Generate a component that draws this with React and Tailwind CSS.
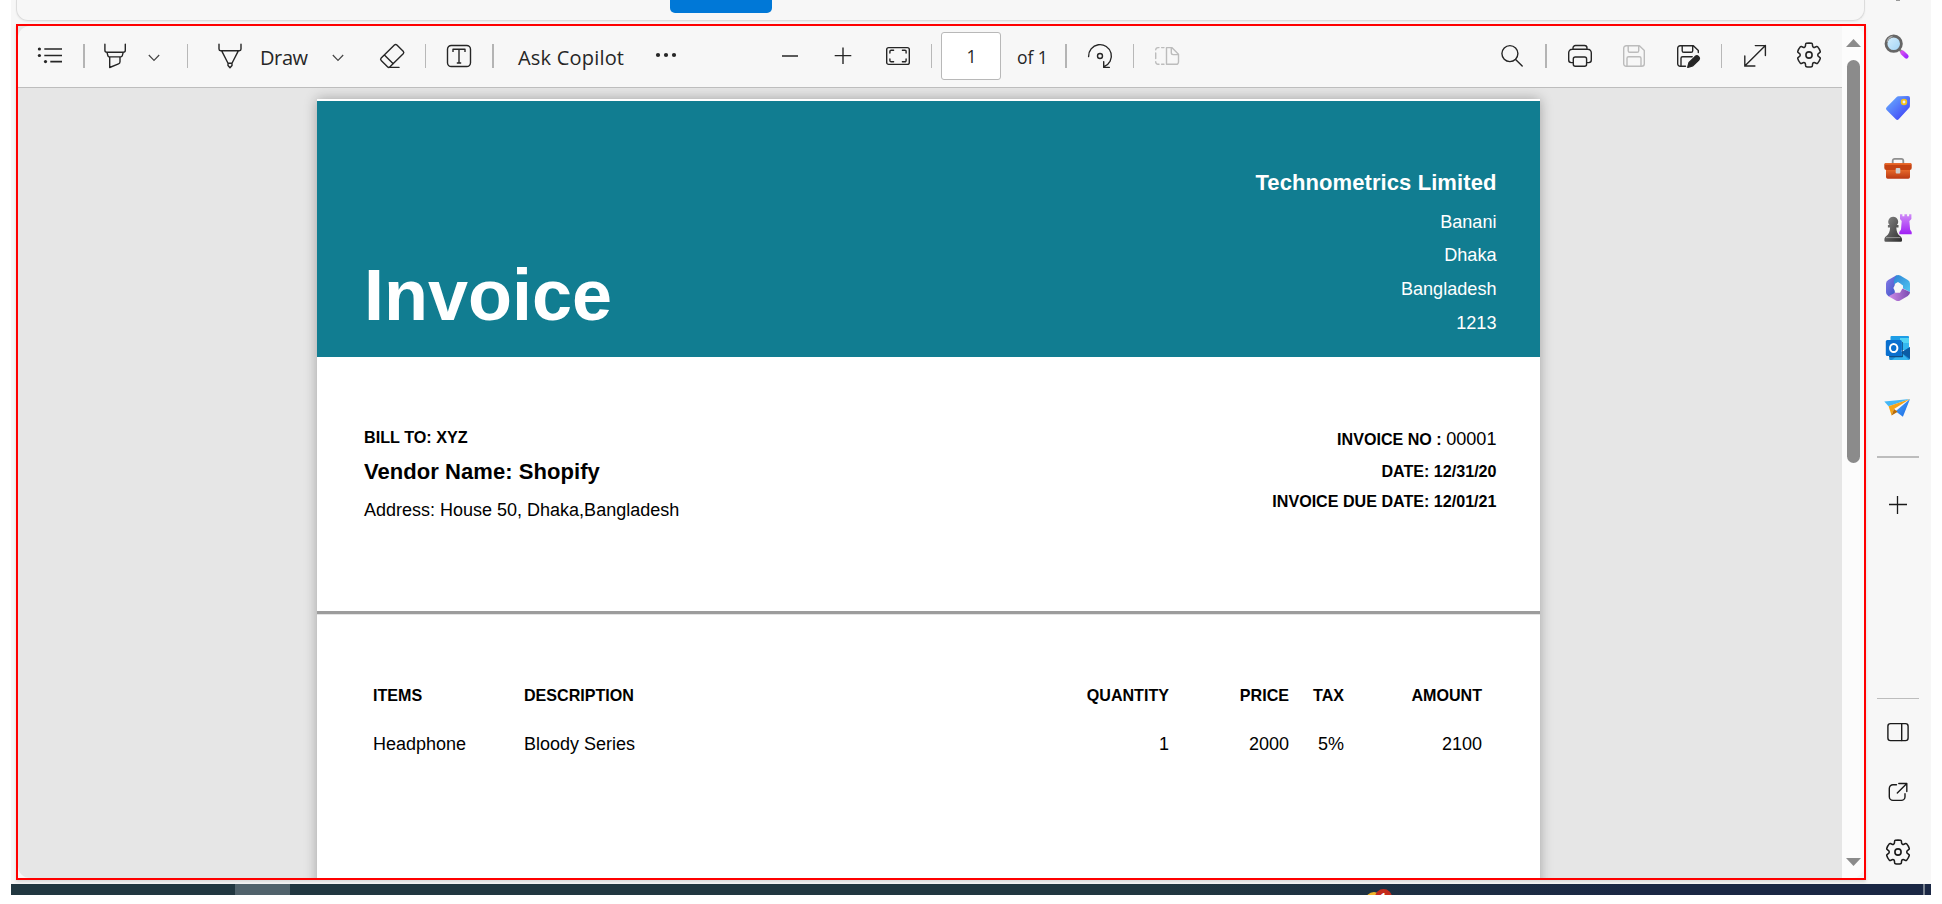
import React from "react";

const GEAR =
  "M12.012 2.25c.734.008 1.465.093 2.182.253a.75.75 0 0 1 .582.649l.17 1.527a1.384 1.384 0 0 0 1.927 1.116l1.401-.615a.75.75 0 0 1 .85.174 9.792 9.792 0 0 1 2.204 3.792.75.75 0 0 1-.271.825l-1.242.916a1.381 1.381 0 0 0 0 2.226l1.243.915a.75.75 0 0 1 .272.826 9.797 9.797 0 0 1-2.204 3.792.75.75 0 0 1-.848.175l-1.407-.617a1.38 1.38 0 0 0-1.926 1.114l-.169 1.526a.75.75 0 0 1-.572.647 9.518 9.518 0 0 1-4.406 0 .75.75 0 0 1-.572-.647l-.168-1.524a1.382 1.382 0 0 0-1.926-1.11l-1.406.616a.75.75 0 0 1-.849-.175 9.798 9.798 0 0 1-2.204-3.796.75.75 0 0 1 .272-.826l1.243-.916a1.38 1.38 0 0 0 0-2.226l-1.243-.914a.75.75 0 0 1-.271-.826 9.793 9.793 0 0 1 2.204-3.792.75.75 0 0 1 .85-.174l1.4.615a1.387 1.387 0 0 0 1.93-1.118l.17-1.526a.75.75 0 0 1 .583-.65c.717-.159 1.45-.243 2.201-.252Z";

function Icon({ className = "", children }) {
  return (
    <svg
      viewBox="0 0 24 24"
      className={`h-6 w-6 shrink-0 overflow-visible fill-none stroke-[1.4] ${className}`}
      stroke="currentColor"
      strokeLinecap="round"
      strokeLinejoin="round"
    >
      {children}
    </svg>
  );
}

function Chevron({ className = "" }) {
  return (
    <svg viewBox="0 0 12 24" className={`h-6 w-3 shrink-0 fill-none ${className}`} stroke="#444" strokeWidth="1.2">
      <path d="M.8 11l5.2 5.3L11.2 11" />
    </svg>
  );
}

function Gear({ className = "" }) {
  return (
    <svg viewBox="0 0 24 26" className={`h-[26px] w-6 shrink-0 overflow-visible fill-none ${className}`} stroke="currentColor" strokeWidth="1.25">
      <path d={GEAR} transform="translate(12 13) scale(1.21 1.24) translate(-12 -12)" />
      <circle cx="12" cy="13" r="3.1" strokeWidth="1.6" />
    </svg>
  );
}

const Thin = ({ className = "" }) => <div className={`h-6 w-px shrink-0 bg-[#b8b8b8] ${className}`} />;
const Thick = ({ className = "" }) => <div className={`h-6 w-0.5 shrink-0 bg-[#b4b4b4] ${className}`} />;

function Toolbar() {
  return (
    <div className="flex h-[62px] shrink-0 items-start rounded-tl-xl border-b border-[#bdbdbd] bg-[#f7f7f7] pt-[18px] font-['Open_Sans','Noto_Sans',sans-serif] text-[#262626]">
      <Icon className="ml-5 stroke-[1.7]">
        <path d="M6.3 5H24M6.3 11.5H24M12.3 17.6H24" strokeLinecap="butt" />
        <g fill="currentColor" stroke="none">
          <circle cx="1.4" cy="5" r="1.6" />
          <circle cx="1.4" cy="11.5" r="1.6" />
          <circle cx="7.5" cy="17.6" r="1.6" />
        </g>
      </Icon>
      <Thick className="ml-[21px]" />
      <Icon className="ml-[19px]">
        <path d="M.9.3v6a2 2 0 0 0 2 2h16.4a2 2 0 0 0 2-2v-6M3 8.4l.9 3.3a1.6 1.6 0 0 0 1.5 1.2h11.4a1.6 1.6 0 0 0 1.5-1.2l.9-3.3M5.7 13v10.5l8.8-3.6a2.3 2.3 0 0 0 1.5-2.1V13" />
      </Icon>
      <Chevron className="ml-5" />
      <Thin className="ml-[27px]" />
      <Icon className="ml-[30px]">
        <path d="M1 .3v4.8a1.6 1.6 0 0 0 1.6 1.6h18.8A1.6 1.6 0 0 0 23 5.1V.3M3.7 6.9l6.3 12.4h4l6.3-12.4M10 19.3v2.2l2 2.2 2-2.2v-2.2" />
      </Icon>
      <span className="ml-[18px] w-[50px] text-[20px] leading-[28px] tracking-[-0.4px] whitespace-nowrap">Draw</span>
      <Chevron className="ml-[22px]" />
      <Icon className="ml-9">
        <path d="M14.4 1l-13.2 13a1.8 1.8 0 0 0 0 2.5l6.3 6.3a1.8 1.8 0 0 0 2.5 0L23.2 9.8a1.8 1.8 0 0 0 0-2.5L16.9 1a1.8 1.8 0 0 0-2.5 0zM4.4 11l8.8 8.7M8.7 23.4H19" />
      </Icon>
      <Thin className="ml-[21px]" />
      <Icon className="ml-[21px]">
        <rect x=".5" y="1.5" width="23" height="21" rx="3.8" />
        <path d="M6 8V5.3h12V8M12 5.3V19M9.8 19h4.4" strokeLinecap="butt" />
      </Icon>
      <Thick className="ml-[21px]" />
      <span className="ml-6 w-[110px] text-[20px] leading-[28px] tracking-[0.2px] whitespace-nowrap">Ask Copilot</span>
      <svg viewBox="0 0 24 24" className="ml-[26px] h-6 w-6 shrink-0" fill="currentColor">
        <circle cx="4" cy="11" r="2.1" />
        <circle cx="12" cy="11" r="2.1" />
        <circle cx="20" cy="11" r="2.1" />
      </svg>
      <Icon className="ml-[100px]">
        <path d="M4 12h16" strokeLinecap="butt" />
      </Icon>
      <Icon className="ml-[29px]">
        <path d="M3.7 11.6h16.6M12 3.4V20" strokeLinecap="butt" />
      </Icon>
      <Icon className="ml-[31px]">
        <rect x=".7" y="3.6" width="22.6" height="16.8" rx="2" />
        <path d="M3.9 9V7.4a1.2 1.2 0 0 1 1.2-1.2H7.6M16.4 6.2h2.5a1.2 1.2 0 0 1 1.2 1.2V9M20.1 15v1.6a1.2 1.2 0 0 1-1.2 1.2h-2.5M7.6 17.8H5.1a1.2 1.2 0 0 1-1.2-1.2V15" />
      </Icon>
      <Thin className="ml-[21px]" />
      <div className="-mt-3 ml-[9px] flex h-12 w-[60px] shrink-0 items-center justify-center rounded-[3px] border border-[#b8b8b8] bg-white pt-px pl-px text-[17.5px]">1</div>
      <span className="ml-4 w-[48px] text-[17.5px] leading-[26px] tracking-[-0.1px] whitespace-nowrap">of 1</span>
      <Thick />
      <Icon className="ml-[21px]">
        <path d="M.6 12.6A11.4 11.4 0 1 1 16 22.7M15.7 17.6v5.8h5.6" />
        <circle cx="12" cy="12" r="2.5" />
      </Icon>
      <Thin className="ml-[21px]" />
      <Icon className="ml-[21px] text-[#bcbcbc]">
        <path d="M4 3.6H3A2.4 2.4 0 0 0 .7 5.8M.7 9v5.6M.7 17.8A2.4 2.4 0 0 0 3 20.3h1M6.6 3.6H9M6.6 20.3H9" />
        <path d="M11.5 3.6h5.3l6.7 6.7v7.8a2.2 2.2 0 0 1-2.2 2.2h-9.8zM16.3 3.8v5a1.8 1.8 0 0 0 1.8 1.8h5.2" />
      </Icon>
      <div className="grow" />
      <Icon>
        <circle cx="8.9" cy="9.6" r="8" />
        <path d="M14.6 15.5l6.6 6.5" />
      </Icon>
      <Thick className="ml-5" />
      <Icon className="ml-[21px]">
        <path d="M5 18.6H3.2a2.5 2.5 0 0 1-2.5-2.5V8.8a3.6 3.6 0 0 1 3.6-3.6h15.4a3.6 3.6 0 0 1 3.6 3.6v7.3a2.5 2.5 0 0 1-2.5 2.5H19M5 5.2V4a2.5 2.5 0 0 1 2.5-2.5h9A2.5 2.5 0 0 1 19 4v1.2" />
        <rect x="5.3" y="13" width="13.3" height="9.3" rx="2" />
      </Icon>
      <Icon className="ml-[31px] text-[#bcbcbc]">
        <path d="M3.2 1.7h13.2l4.9 4.9v13.2a2.5 2.5 0 0 1-2.5 2.5H3.2a2.5 2.5 0 0 1-2.5-2.5V4.2a2.5 2.5 0 0 1 2.5-2.5zM5.2 1.8v4.9a1.6 1.6 0 0 0 1.6 1.6h7.3a1.6 1.6 0 0 0 1.6-1.6V1.8M4 22.2v-7.9a1.6 1.6 0 0 1 1.6-1.6h10.8a1.6 1.6 0 0 1 1.6 1.6v7.9" />
      </Icon>
      <Icon className="ml-[30px]">
        <path d="M8.5 22.3H3.2a2.5 2.5 0 0 1-2.5-2.5V4.2a2.5 2.5 0 0 1 2.5-2.5h13.2l4.9 4.9v2M5.2 1.8v4.9a1.6 1.6 0 0 0 1.6 1.6h7.3a1.6 1.6 0 0 0 1.6-1.6V1.8M4 22.2v-7.9a1.6 1.6 0 0 1 1.6-1.6h9.6" />
        <path d="M18.3 12.4a2.5 2.5 0 0 1 3.5 3.5l-6 5.9-5 1.5 1.3-4.9z" fill="currentColor" />
      </Icon>
      <Thin className="ml-5" />
      <Icon className="ml-[22px]">
        <path d="M.8 22L21.4 1.6M11.3 1.6h10.1v10M.8 12v10h10.1" strokeLinejoin="miter" />
      </Icon>
      <Gear className="-mt-[2px] mr-[21px] ml-[29px]" />
    </div>
  );
}

function InvoicePage() {
  return (
    <div className="ml-[299px] h-[800px] w-[1223px] bg-white pt-[2px] font-['Liberation_Sans',Arial,sans-serif] text-black shadow-[0_0_12px_rgba(0,0,0,0.3)]">
      <header className="flex h-64 items-end justify-between bg-[#117d91] pr-[43.5px] pl-[47px] text-white">
        <h1 className="mb-[22px] text-[72px] leading-[80px] font-bold">Invoice</h1>
        <div className="flex flex-col self-start pt-[67px] text-right text-[18.1px]">
          <div className="mb-[7px] text-[22px] leading-[30px] font-bold tracking-[0.09px]">Technometrics Limited</div>
          <div className="leading-[34px]">Banani</div>
          <div className="leading-[32px]">Dhaka</div>
          <div className="leading-[36px]">Bangladesh</div>
          <div className="leading-[32px]">1213</div>
        </div>
      </header>
      <section className="flex h-[254px] justify-between pr-[43.5px] pl-[47px]">
        <div className="flex flex-col gap-1.5 pt-[68px]">
          <div className="text-[16.2px] leading-6 font-bold">BILL TO: XYZ</div>
          <div className="text-[22px] leading-[34px] font-bold tracking-[0.06px]">Vendor Name: Shopify</div>
          <div className="text-[18px] leading-[30px]">Address: House 50, Dhaka,Bangladesh</div>
        </div>
        <div className="flex flex-col pt-[67px] text-right text-[16.1px] leading-[30px] font-bold">
          <div className="mb-[2px] h-[30px]">
            INVOICE NO : <span className="text-[18.1px] font-normal">00001</span>
          </div>
          <div>DATE: 12/31/20</div>
          <div>INVOICE DUE DATE: 12/01/21</div>
        </div>
      </section>
      <div className="h-1 border-b border-[#e4e4e4] bg-[#9c9c9c]" />
      <table className="mt-[68px] ml-[56px] w-[1109px] table-fixed border-collapse text-right text-[18px] leading-[30px]">
        <colgroup>
          <col className="w-[151px]" />
          <col className="w-[400px]" />
          <col className="w-[245px]" />
          <col className="w-[120px]" />
          <col className="w-[55px]" />
          <col className="w-[138px]" />
        </colgroup>
        <thead>
          <tr className="h-[46px] align-top text-[16.1px] leading-6">
            <th className="text-left">ITEMS</th>
            <th className="text-left">DESCRIPTION</th>
            <th>QUANTITY</th>
            <th>PRICE</th>
            <th>TAX</th>
            <th>AMOUNT</th>
          </tr>
        </thead>
        <tbody>
          <tr>
            <td className="text-left">Headphone</td>
            <td className="text-left">Bloody Series</td>
            <td>1</td>
            <td>2000</td>
            <td>5%</td>
            <td>2100</td>
          </tr>
        </tbody>
      </table>
    </div>
  );
}

function Scrollbar() {
  return (
    <div className="flex w-[22px] shrink-0 flex-col items-center rounded-r-xl bg-[#fcfcfc] pt-[13px] pb-3">
      <svg viewBox="0 0 16 8" className="ml-px h-2 w-[15px] fill-[#8b8b8b]" preserveAspectRatio="none">
        <path d="M8 0l8 8H0z" />
      </svg>
      <div className="mt-[13px] h-[403px] w-[13px] rounded-full bg-[#8b8b8b]" />
      <svg viewBox="0 0 16 8" className="mt-auto ml-px h-2 w-[15px] fill-[#8b8b8b]" preserveAspectRatio="none">
        <path d="M8 8l8-8H0z" />
      </svg>
    </div>
  );
}

function AppIcon({ className = "", children }) {
  return (
    <svg viewBox="0 0 28 28" className={`h-7 w-7 shrink-0 overflow-visible ${className}`}>
      {children}
    </svg>
  );
}

function Gradient({ id, from, to, x2 = "1", y2 = "1" }) {
  return (
    <linearGradient id={id} x1="0" y1="0" x2={x2} y2={y2}>
      <stop stopColor={from} />
      <stop offset="1" stopColor={to} />
    </linearGradient>
  );
}

function Sidebar() {
  return (
    <aside className="flex w-[65px] shrink-0 flex-col items-center pr-px text-[#1a1a1a]">
      <div className="h-px w-1 bg-[#999]" />
      <AppIcon className="mt-[31px]">
        <defs>
          <Gradient id="lens" from="#d9f0fd" to="#9fd3f6" />
          <Gradient id="handle" from="#d24bf0" to="#a32bff" />
        </defs>
        <path d="M15 17.2l3 3" stroke="#888" strokeWidth="2.4" />
        <path d="M18.4 20.6l4 3.8" stroke="url(#handle)" strokeWidth="4.4" strokeLinecap="round" />
        <circle cx="9.7" cy="11.7" r="7.7" fill="url(#lens)" stroke="#666" strokeWidth="2.8" />
        <path d="M3.2 9.8a7 7 0 0 1 5.3-5.4" fill="none" stroke="#aaa" strokeWidth="1.3" />
      </AppIcon>
      <AppIcon className="mt-[34px]">
        <defs>
          <Gradient id="tag" from="#6cb6ff" to="#3a35f5" />
        </defs>
        <path d="M14.2 2.2L24 2a2 2 0 0 1 2 2l-.1 8a3 3 0 0 1-.9 2.1L14.7 25.2a2 2 0 0 1-2.8 0L2.6 16a2 2 0 0 1 0-2.8L12.7 3a3 3 0 0 1 1.5-.8z" fill="url(#tag)" />
        <circle cx="20" cy="8" r="2.3" fill="#e8edff" stroke="#f3c21b" strokeWidth="1.8" />
      </AppIcon>
      <AppIcon className="mt-8">
        <defs>
          <Gradient id="case" from="#f0732f" to="#b93812" x2="0" />
        </defs>
        <path d="M8.7 10V6.8a2 2 0 0 1 2-2h6.6a2 2 0 0 1 2 2V10" fill="none" stroke="#8f8f8f" strokeWidth="1.8" />
        <path d="M2 14h24v9a1.7 1.7 0 0 1-1.7 1.7H3.7A1.7 1.7 0 0 1 2 23z" fill="url(#case)" />
        <path d="M1.5 9.2h25a1.2 1.2 0 0 1 1.2 1.2V14a2 2 0 0 1-2 2H2.3a2 2 0 0 1-2-2v-3.6a1.2 1.2 0 0 1 1.2-1.2z" fill="#c54312" />
        <path d="M1 10h26" stroke="#ee6a27" strokeWidth="1.5" />
        <rect x="11.7" y="14" width="4.6" height="5.4" rx="1" fill="#cfcfcf" />
      </AppIcon>
      <AppIcon className="mt-[31px]">
        <defs>
          <Gradient id="rook" from="#cf8bf7" to="#a020f5" x2="0" />
          <Gradient id="pawn" from="#8a8a8a" to="#2c2c2c" />
        </defs>
        <path d="M16 1.3h2.4v2h2v-2h2.7v2h2v-2h2.3V6l-2 2 .7 8.5 1.6 2.5v2.2H15.3V19l1.7-2.5L17.7 8 16 6z" fill="url(#rook)" />
        <path d="M9.2 3.7a5 5 0 0 1 3.6 8.4h1.7v2.4h-2.2c.2 4 1.2 6.5 3.7 8.6 1.5 1 2 2.2 2 3.4v1a1.2 1.2 0 0 1-1.2 1.2H1.6a1.2 1.2 0 0 1-1.2-1.2v-1c0-1.2.5-2.4 2-3.4 2.5-2.1 3.5-4.6 3.7-8.6H3.9v-2.4h1.7a5 5 0 0 1 3.6-8.4z" fill="url(#pawn)" />
        <path d="M2 24.6h14.3" stroke="#aaa" strokeWidth=".8" />
      </AppIcon>
      <AppIcon className="mt-[33px]">
        <defs>
          <Gradient id="m1" from="#8c7ce8" to="#3451c4" />
          <Gradient id="m2" from="#2d83d5" to="#52c8f2" />
          <Gradient id="m3" from="#d08be8" to="#7a4bb0" x2="1" y2="0" />
        </defs>
        <path d="M12.5 1.3L4.2 6A4.4 4.4 0 0 0 2 9.8v8.4A4.3 4.3 0 0 0 4.2 22l2 1.1 4.6-2.6V10.2L13 7z" fill="url(#m1)" />
        <path d="M12 1.5a4.4 4.4 0 0 1 4.2 0L23.8 6A4.4 4.4 0 0 1 26 9.8V18l-7-3.5v-3L14 8l-4 2.3V5.5z" fill="url(#m2)" />
        <path d="M4.5 22.2l9-4.7 4.8-3L26 18a4.4 4.4 0 0 1-2.2 4l-7.7 4.4a4.2 4.2 0 0 1-4.2 0z" fill="url(#m3)" />
        <path d="M12 9.2h4l2.7 4.8-2.7 4.8h-4L9.3 14z" fill="#f7f7f7" />
      </AppIcon>
      <AppIcon className="mt-8">
        <rect x="6.5" y="2" width="18.5" height="14" rx="1" fill="#1e9de6" />
        <path d="M16 4h9v5.5h-9z" fill="#52d3f5" />
        <path d="M10 9.5h15V16H10z" fill="#35b8f1" />
        <path d="M6 26h18.5a1.5 1.5 0 0 0 1.5-1.5V13l-9 5.5L5.2 14v11a1 1 0 0 0 .8 1z" fill="#1b8fd8" />
        <path d="M26 13l-9 5.5 9 6.5z" fill="#0b5ca5" />
        <path d="M8 26h17l-8-7.5z" fill="#35b5ef" />
        <path d="M5.2 21.5h13V8h.8v14.5a.8.8 0 0 1-.8.8h-13z" fill="#124d83" />
        <rect x="1.8" y="6" width="16" height="16" rx="1.5" fill="#0a70cf" />
        <ellipse cx="9.7" cy="14" rx="3.7" ry="4.1" fill="none" stroke="#fff" strokeWidth="2" />
      </AppIcon>
      <AppIcon className="mt-[31px]">
        <defs>
          <Gradient id="wing" from="#4ea5ff" to="#1769e0" />
        </defs>
        <path d="M26 6L18.9 23.8l-7.3-5.6z" fill="url(#wing)" />
        <path d="M.3 8.5L26 6 4.6 13.2z" fill="#45b7f5" />
        <path d="M26 6L4.6 13.2l3 9.3L10 16z" fill="#f5a417" />
        <path d="M7.6 22.5L10 16l3.7 2.7z" fill="#b96c08" />
      </AppIcon>
      <div className="mt-[35px] h-0.5 w-[42px] shrink-0 bg-[#bdbdbd]" />
      <svg viewBox="0 0 18 18" className="mt-[38px] h-[18px] w-[18px] shrink-0" stroke="#1a1a1a" strokeWidth="1.3">
        <path d="M0 8.5h18M8.5 0v18" />
      </svg>
      <div className="mt-[184px] h-px w-[42px] shrink-0 bg-[#bdbdbd]" />
      <Icon className="mt-[21px]">
        <rect x="1.9" y="3.6" width="20.2" height="17" rx="2.6" />
        <path d="M15.7 3.6v17" />
      </Icon>
      <Icon className="mt-9">
        <path d="M10.5 4.7H7a3.7 3.7 0 0 0-3.7 3.7v8.3A3.7 3.7 0 0 0 7 20.4h8.3a3.7 3.7 0 0 0 3.7-3.7v-2.9M12.8 3.5h8v8M20.6 3.7l-9.3 9.3" />
      </Icon>
      <Gear className="mt-[35px]" />
    </aside>
  );
}

function Taskbar() {
  return (
    <div className="mx-[11px] flex h-[11px] w-[1920px] overflow-hidden bg-linear-to-r from-[#213740] from-60% to-[#1a2744] to-85%">
      <div className="ml-[224px] w-[55px] bg-[#50626b]" />
      <div className="relative ml-[1075px] w-[28px] overflow-hidden">
        <div className="absolute top-[8px] left-0 h-[18px] w-[18px] rounded-full bg-[#f0b62a]" />
        <div className="absolute top-[5px] left-[10px] h-[17px] w-[17px] rounded-full bg-[#c42b1c] text-center font-['Open_Sans',sans-serif] text-[11px] leading-[16px] font-semibold text-white">
          1
        </div>
      </div>
      <div className="ml-[530px] w-0.5 bg-[#77818f]" />
    </div>
  );
}

export default function App() {
  return (
    <div className="h-[904px] w-[1942px] overflow-hidden bg-white">
      <div className="mx-[11px] flex h-[884px] w-[1920px] bg-[#f7f7f7]">
        <div className="w-[1855px] shrink-0 pl-[5px]">
          <div className="mb-[3px] h-[21px] w-[1849px] rounded-b-xl border border-t-0 border-[#dcdcdc] shadow-[0_1px_2px_rgba(0,0,0,0.06)]">
            <div className="ml-[653px] h-[13px] w-[102px] rounded-b-[5px] bg-[#0078d7]" />
          </div>
          <div className="flex h-[856px] w-[1850px] border-2 border-[#ff0000] shadow-[0_2px_3px_rgba(0,0,0,0.12)]">
            <div className="flex w-[1824px] shrink-0 flex-col overflow-hidden rounded-bl-xl bg-[#e6e6e6]">
              <Toolbar />
              <div className="grow overflow-hidden pt-[11px]">
                <InvoicePage />
              </div>
            </div>
            <Scrollbar />
          </div>
        </div>
        <Sidebar />
      </div>
      <Taskbar />
    </div>
  );
}
